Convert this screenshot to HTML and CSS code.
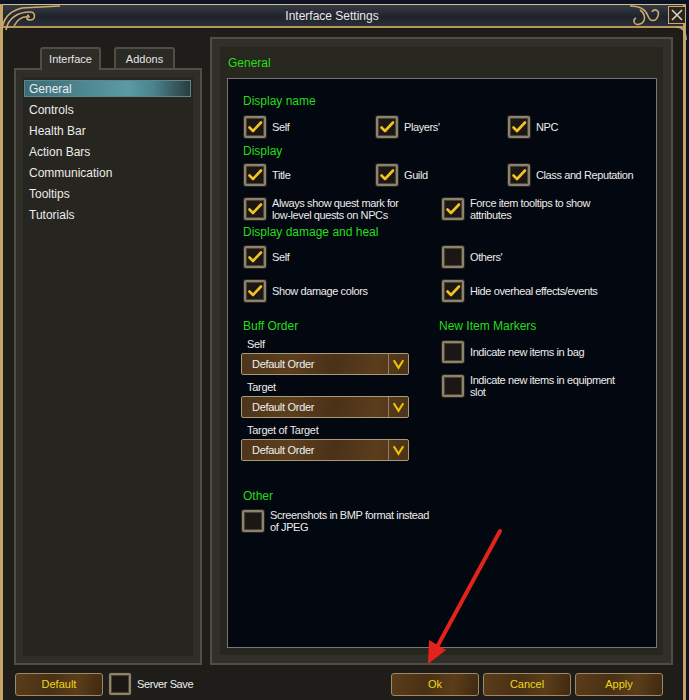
FILE: index.html
```html
<!DOCTYPE html>
<html lang="en">
<head>
    <meta charset="UTF-8">
    <title>Interface Settings</title>
    <link rel="stylesheet" href="styles.css">
</head>
<body>
    <svg width="0" height="0" style="position:absolute">
        <symbol id="check" viewBox="0 0 18 18">
            <path d="M3.5 9.5 L7 13 L15 4.5" fill="none" stroke="#f3c322" stroke-width="2.6" stroke-linecap="round" stroke-linejoin="round"/>
        </symbol>
        <symbol id="chevron" viewBox="0 0 20 20">
            <path d="M5 6 L10 14 L15 6" fill="none" stroke="#f2c200" stroke-width="2.2"/>
        </symbol>
    </svg>

    <div class="window">
        <div class="titlebar">Interface Settings</div>
        <div class="close">
            <svg width="14" height="14" viewBox="0 0 14 14"><path d="M2 2 L12 12 M12 2 L2 12" stroke="#d8d0c0" stroke-width="1.6"/></svg>
        </div>

        <div class="main">
            <div class="sidebar">
                <div class="tabs">
                    <div class="tab active">Interface</div>
                    <div class="tab">Addons</div>
                </div>
                <ul class="menu">
                    <li class="selected">General</li>
                    <li>Controls</li>
                    <li>Health Bar</li>
                    <li>Action Bars</li>
                    <li>Communication</li>
                    <li>Tooltips</li>
                    <li>Tutorials</li>
                </ul>
            </div>

            <div class="panel">
                <div class="panel-title">General</div>
                <div class="settings">
                    <h3>Display name</h3>
                    <div class="row three r1">
                        <div class="option"><span class="box"><svg><use href="#check"/></svg></span>Self</div>
                        <div class="option"><span class="box"><svg><use href="#check"/></svg></span>Players'</div>
                        <div class="option"><span class="box"><svg><use href="#check"/></svg></span>NPC</div>
                    </div>

                    <h3 class="h-display">Display</h3>
                    <div class="row three r2">
                        <div class="option"><span class="box"><svg><use href="#check"/></svg></span>Title</div>
                        <div class="option"><span class="box"><svg><use href="#check"/></svg></span>Guild</div>
                        <div class="option"><span class="box"><svg><use href="#check"/></svg></span>Class and Reputation</div>
                    </div>
                    <div class="row two r3">
                        <div class="option"><span class="box"><svg><use href="#check"/></svg></span>Always show quest mark for<br>low-level quests on NPCs</div>
                        <div class="option"><span class="box"><svg><use href="#check"/></svg></span>Force item tooltips to show<br>attributes</div>
                    </div>

                    <h3 class="h-damage">Display damage and heal</h3>
                    <div class="row two r4">
                        <div class="option"><span class="box"><svg><use href="#check"/></svg></span>Self</div>
                        <div class="option"><span class="box"></span>Others'</div>
                    </div>
                    <div class="row two r5">
                        <div class="option"><span class="box"><svg><use href="#check"/></svg></span>Show damage colors</div>
                        <div class="option"><span class="box"><svg><use href="#check"/></svg></span>Hide overheal effects/events</div>
                    </div>

                    <div class="columns">
                        <div class="col-left">
                            <h3>Buff Order</h3>
                            <div class="field-label">Self</div>
                            <div class="select"><span>Default Order</span><i><svg><use href="#chevron"/></svg></i></div>
                            <div class="field-label">Target</div>
                            <div class="select"><span>Default Order</span><i><svg><use href="#chevron"/></svg></i></div>
                            <div class="field-label">Target of Target</div>
                            <div class="select"><span>Default Order</span><i><svg><use href="#chevron"/></svg></i></div>
                        </div>
                        <div class="col-right">
                            <h3>New Item Markers</h3>
                            <div class="option m1"><span class="box"></span>Indicate new items in bag</div>
                            <div class="option m2"><span class="box"></span>Indicate new items in equipment<br>slot</div>
                        </div>
                    </div>

                    <h3 class="h-other">Other</h3>
                    <div class="option r-other"><span class="box"></span>Screenshots in BMP format instead<br>of JPEG</div>
                </div>
            </div>
        </div>

        <div class="footer">
            <div class="btn">Default</div>
            <span class="box server"></span>
            <span class="server-label">Server Save</span>
            <div class="actions">
                <div class="btn">Ok</div>
                <div class="btn">Cancel</div>
                <div class="btn">Apply</div>
            </div>
        </div>

        <!-- decorations over the frame -->
        <svg class="overlay" width="689" height="700" viewBox="0 0 689 700">
            <g fill="none" stroke="#c9ab6c" stroke-width="1.6">
                <path d="M1 40 C1 22 6 12 22 8 L60 6"/>
                <path d="M6 30 C8 18 18 12 30 12 C36 12 36 20 30 20 C26 20 26 16 29 15"/>
                <path d="M14 26 C18 18 24 16 30 17"/>
                <path d="M686 40 C686 30 682 27 676 27"/>
                <path d="M630 6 C640 6 646 10 648 16 C650 22 656 22 658 16 C660 10 654 8 652 12"/>
                <path d="M640 10 C646 14 646 22 640 24 C634 26 632 20 636 18"/>
            </g>
            <g>
                <line x1="500" y1="531" x2="437" y2="647" stroke="#e3231b" stroke-width="4" stroke-linecap="round"/>
                <polygon points="428,664 429,640 446,650" fill="#e3231b"/>
            </g>
        </svg>
    </div>
</body>
</html>
```

FILE: styles.css
```css
* {
    margin: 0;
    padding: 0;
    box-sizing: border-box;
}

body {
    width: 689px;
    height: 700px;
    overflow: hidden;
    background: #0d1324;
    font-family: "Liberation Sans", Arial, sans-serif;
}

.window {
    position: relative;
    width: 686px;
    height: 696px;
    margin-top: 4px;
    border-left: 3px solid #c4a468;
    border-right: 3px solid #c4a468;
    background: #1e1d19;
    display: flex;
    flex-direction: column;
}

.titlebar {
    height: 24px;
    padding: 2px 22px 0 0;
    border-top: 1px solid #d4bb80;
    border-bottom: 2px solid #b5975c;
    background: linear-gradient(#353b47, #1f232c 55%, #2a2e37);
    color: #e8e8e8;
    font-size: 12px;
    line-height: 18px;
    text-align: center;
}

.close {
    position: absolute;
    left: 665px;
    top: 2px;
    width: 18px;
    height: 18px;
    border: 1px solid #c9ab6c;
    background: #2a2520;
    display: flex;
    align-items: center;
    justify-content: center;
}

.main {
    flex: 1;
    display: flex;
    gap: 8px;
    padding: 9px 10px 0 11px;
}

.sidebar {
    width: 188px;
    display: flex;
    flex-direction: column;
    padding-top: 10px;
}

.tabs {
    display: flex;
    gap: 13px;
    height: 21px;
    padding-left: 26px;
}

.tab {
    width: 61px;
    height: 21px;
    border: 2px solid #4f4d46;
    border-bottom: none;
    border-radius: 3px 3px 0 0;
    background: #2a2924;
    color: #e6e6e6;
    font-size: 11px;
    line-height: 20px;
    text-align: center;
}

.tab.active {
    position: relative;
    z-index: 1;
    height: 23px;
    margin-bottom: -2px;
    background: #2d2c26;
}

.menu {
    flex: 1;
    list-style: none;
    padding: 10px 9px 0 8px;
    border: 2px solid #4f4d46;
    background: #26251f;
    box-shadow: inset 0 0 0 7px #2e2d27;
}

.menu li {
    height: 17px;
    margin-bottom: 4px;
    padding-left: 5px;
    color: #ececec;
    font-size: 12px;
    line-height: 17px;
}

.menu li.selected {
    margin-bottom: 5px;
    padding: 1px 0 0 4px;
    border: 1px solid #5e878c;
    line-height: 15px;
    background: linear-gradient(to right, #3a6c76, #5b9ba5 62%, #4a838c 78%, #2a3c3e);
}

.panel {
    width: 463px;
    display: flex;
    flex-direction: column;
    padding: 0 14px 15px 15px;
    border: 2px solid #4f4d46;
    background: #27261f;
    box-shadow: inset 0 0 0 8px #302f29;
}

.panel-title {
    height: 39px;
    padding: 17px 0 0 1px;
    color: #24de18;
    font-size: 12px;
    line-height: 14px;
}

.settings {
    flex: 1;
    padding: 15px 0 0 16px;
    border: 1px solid #76767a;
    background: #03070f;
}

h3 {
    height: 14px;
    margin-left: -1px;
    color: #24de18;
    font-size: 12px;
    font-weight: normal;
    line-height: 14px;
}

.row {
    display: flex;
}

.option {
    display: flex;
    align-items: center;
    gap: 6px;
    min-height: 22px;
    color: #ececec;
    font-size: 11px;
    letter-spacing: -0.4px;
    line-height: 12px;
    white-space: nowrap;
}

.three .option { width: 132px; }
.two .option { width: 198px; }

.r1 { margin-top: 8px; }
.h-display { margin-top: 6px; }
.r2 { margin-top: 6px; }
.r3 { margin-top: 11px; min-height: 24px; }
.h-damage { margin-top: 4px; }
.r4 { margin-top: 7px; }
.r5 { margin-top: 12px; }

.box {
    flex: none;
    width: 22px;
    height: 22px;
    border: 2px solid #8d826b;
    border-radius: 2px;
    background: #1a1714;
    box-shadow: inset 0 0 0 1px #4a4336, 0 0 0 1px #2a261f;
    display: flex;
    align-items: center;
    justify-content: center;
}

.box svg {
    width: 18px;
    height: 18px;
}

.columns {
    display: flex;
    margin-top: 17px;
}

.col-left {
    width: 198px;
}

.col-right h3 {
    margin-left: -3px;
}

.field-label {
    margin-top: 5px;
    padding-left: 3px;
    color: #ececec;
    font-size: 11px;
    letter-spacing: -0.3px;
    line-height: 13px;
}

.select + .field-label { margin-top: 6px; }

.select {
    display: flex;
    width: 168px;
    height: 22px;
    margin: 2px 0 0 -3px;
    border: 1px solid #a99a78;
    border-radius: 2px;
    background: linear-gradient(100deg, #4d3419, #5c3f1d 30%, #4a3118 55%, #5a3d1c 80%, #4b3318);
    color: #efefef;
    font-size: 11px;
    letter-spacing: -0.3px;
    line-height: 20px;
}

.select span {
    flex: 1;
    padding-left: 10px;
}

.select i {
    width: 20px;
    border-left: 1px solid #8f8062;
    display: flex;
    align-items: center;
    justify-content: center;
}

.select svg {
    width: 20px;
    height: 20px;
}

.m1 { margin-top: 8px; }
.m2 { margin-top: 11px; min-height: 24px; }

.h-other { margin-top: 28px; }

.r-other {
    margin: 6px 0 0 -2px;
    min-height: 24px;
}

.footer {
    height: 35px;
    display: flex;
    align-items: flex-start;
    padding: 8px 20px 0 12px;
}

.btn {
    width: 88px;
    height: 23px;
    border: 1px solid #9a8a66;
    border-radius: 3px;
    background: linear-gradient(100deg, #5a3c19, #4a3014 40%, #5b3d1a 70%, #402911);
    color: #ecd81a;
    font-size: 11px;
    line-height: 21px;
    text-align: center;
}

.box.server {
    margin-left: 6px;
}

.server-label {
    margin-left: 6px;
    color: #ececec;
    font-size: 11px;
    letter-spacing: -0.4px;
    line-height: 23px;
}

.actions {
    display: flex;
    gap: 4px;
    margin-left: auto;
}

.overlay {
    position: absolute;
    left: -3px;
    top: -4px;
    pointer-events: none;
}
```
